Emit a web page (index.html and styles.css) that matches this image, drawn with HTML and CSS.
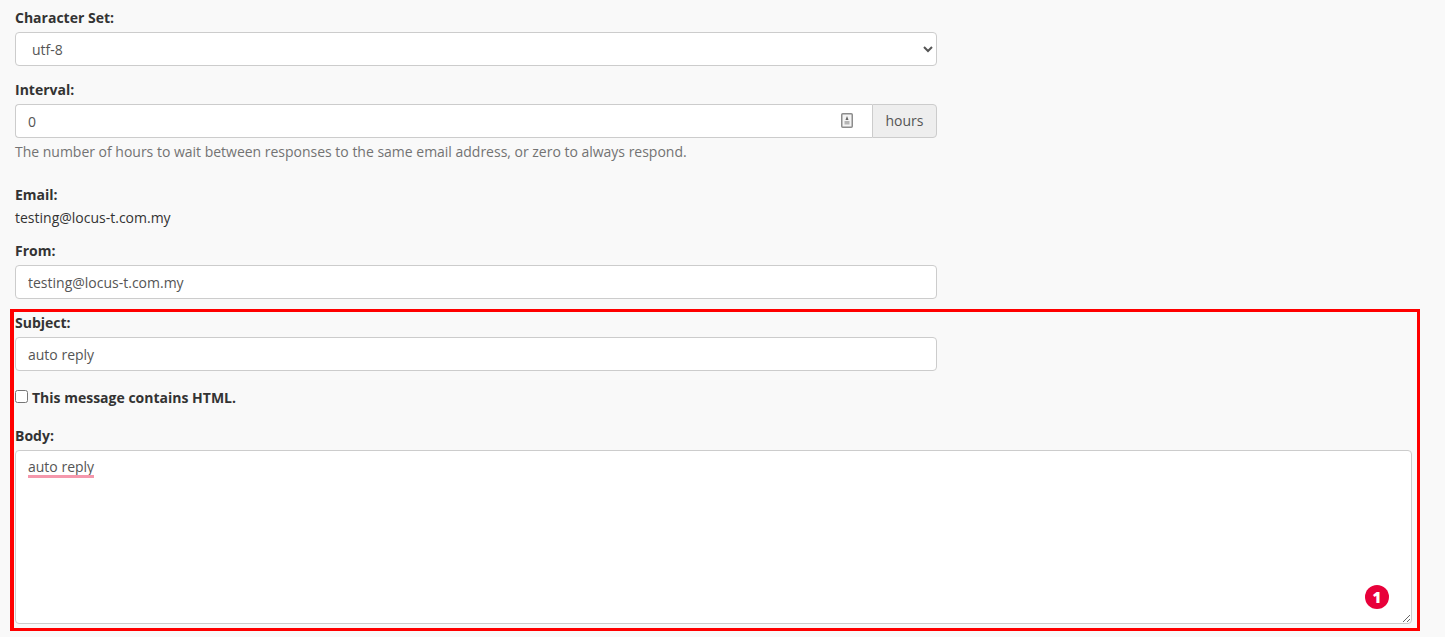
FILE: index.html
```html
<!DOCTYPE html>
<html lang="en">
<head>
<meta charset="utf-8">
<title>Auto reply</title>
<link rel="stylesheet" href="styles.css">
</head>
<body>
<form class="form">
  <div class="group narrow">
    <label class="label" for="charset">Character Set:</label>
    <select class="control select" id="charset"><option>utf-8</option></select>
  </div>
  <div class="group narrow">
    <label class="label" for="interval">Interval:</label>
    <div class="input-group">
      <div class="spin-wrap">
        <input class="control joined" id="interval" type="text" value="0">
        <svg class="spinner" width="12" height="15" viewBox="0 0 12 15" aria-hidden="true">
          <rect x="0.75" y="0.75" width="10.5" height="13.5" rx="1" fill="#f4f4f4" stroke="#8c8c8c" stroke-width="1.5"/>
          <path d="M6 3 L7.5 7 H4.5 Z" fill="#666"/>
          <rect x="3.5" y="8" width="5" height="3.5" fill="#b5b5b5"/>
        </svg>
      </div>
      <span class="addon">hours</span>
    </div>
    <p class="help">The number of hours to wait between responses to the same email address, or zero to always respond.</p>
  </div>
  <div class="static">
    <div class="label tight">Email:</div>
    <div class="value">testing@locus-t.com.my</div>
  </div>
  <div class="group narrow">
    <label class="label" for="from">From:</label>
    <input class="control" id="from" type="text" value="testing@locus-t.com.my">
  </div>
  <div class="group narrow">
    <label class="label" for="subject">Subject:</label>
    <input class="control" id="subject" type="text" value="auto reply">
  </div>
  <div class="check-row">
    <input class="check" id="html" type="checkbox">
    <label class="check-label" for="html">This message contains HTML.</label>
  </div>
  <div class="group">
    <label class="label" for="body">Body:</label>
    <div class="area-wrap">
      <textarea class="control area" id="body" spellcheck="false">auto reply</textarea>
      <span class="squiggle"></span>
    </div>
  </div>
</form>
<div class="highlight"></div>
<div class="badge">1</div>
</body>
</html>
```
FILE: styles.css
```css
* { box-sizing: border-box; }
html, body { margin: 0; height: 637px; overflow: hidden; }
body {
  position: relative;
  background: #f9f9f9;
  color: #333;
  font: 14px/21px "Open Sans", sans-serif;
}
.form { padding: 6px 33px 0 15px; }
.group { margin-bottom: 12px; }
.narrow { width: 922px; }
.label { display: block; padding-top: 1px; margin-bottom: 4px; font-weight: 700; }
.label.tight { padding-top: 0; margin-bottom: 2px; }
.control {
  display: block;
  width: 100%;
  height: 34px;
  padding: 6px 12px;
  border: 1px solid #ccc;
  border-radius: 4px;
  background: #fff;
  color: #555;
  font: 14px/20px "Open Sans", sans-serif;
  outline: none;
}
.input-group { display: flex; }
.spin-wrap { position: relative; flex: 1; }
.joined { border-radius: 4px 0 0 4px; border-right: 0; }
.spinner { position: absolute; right: 19px; top: 9px; }
.addon {
  display: flex;
  align-items: center;
  justify-content: center;
  width: 65px;
  height: 34px;
  padding-bottom: 2px;
  border: 1px solid #ccc;
  border-radius: 0 4px 4px 0;
  background: #eee;
  color: #555;
}
.help { margin: 3px 0 0; color: #737373; letter-spacing: -0.01px; }
.static { margin: 22px 0 11px; }
.check-row { display: flex; align-items: center; height: 21px; margin: 16px 0; }
.check { width: 13px; height: 13px; margin: 0 4px 2px 0; }
.check-label { font-weight: 700; }
.area-wrap { position: relative; }
.area { height: 174px; resize: vertical; }
.squiggle {
  position: absolute;
  left: 13px;
  top: 25px;
  width: 66px;
  height: 3px;
  background: #f598ac;
}
.highlight {
  position: absolute;
  left: 10px;
  top: 309px;
  width: 1410px;
  height: 322px;
  border: 3px solid #f00;
  border-left-width: 4px;
}
.badge {
  position: absolute;
  left: 1365px;
  top: 585px;
  width: 24px;
  height: 24px;
  border-radius: 50%;
  background: #e8003a;
  color: #fff;
  font: 800 15px/24px "Open Sans", sans-serif;
  text-align: center;
}
```
